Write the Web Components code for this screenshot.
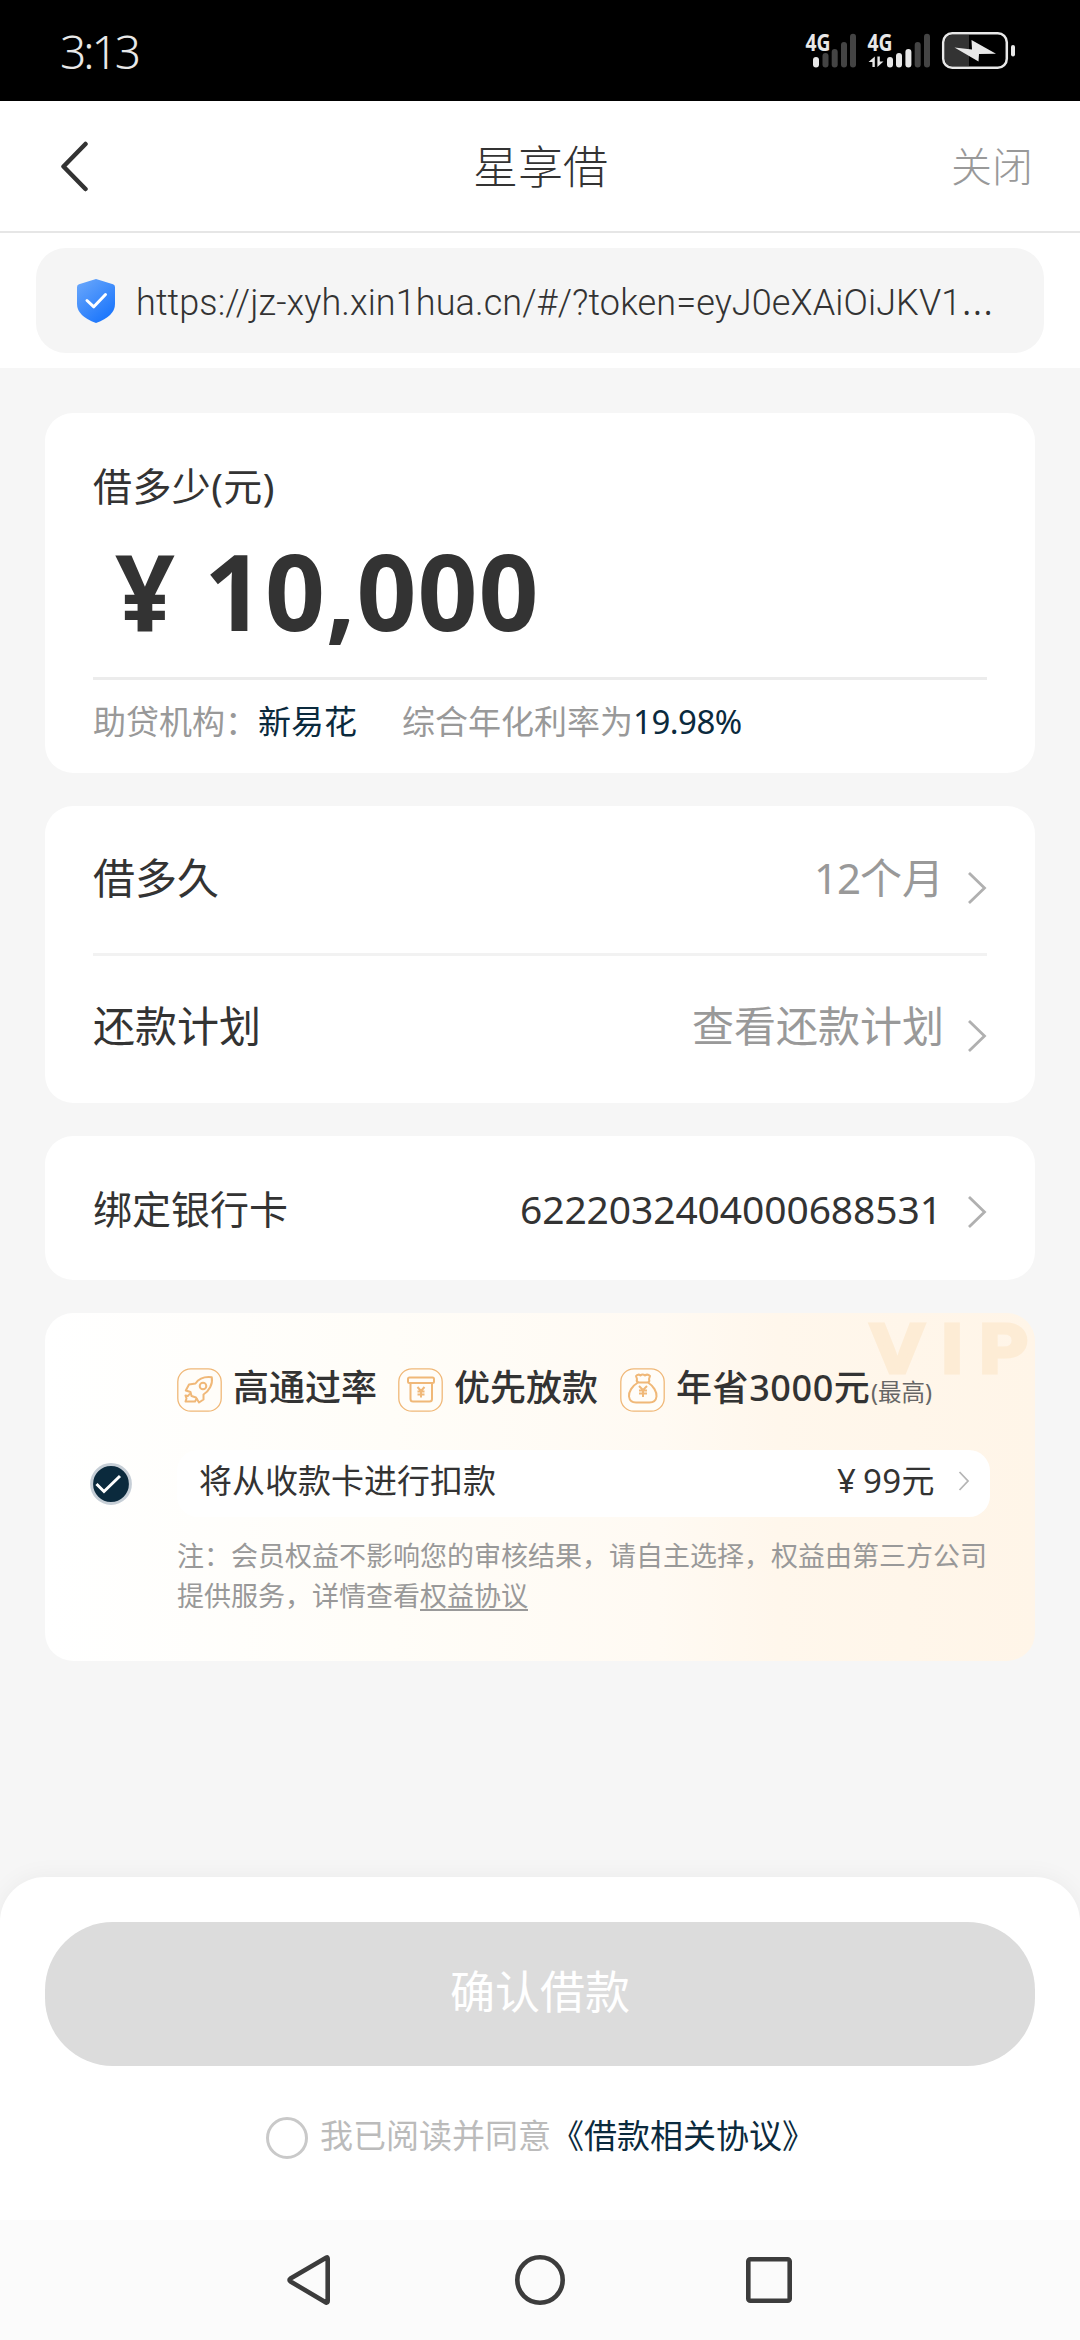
<!DOCTYPE html>
<html lang="zh-CN">
<head>
<meta charset="utf-8">
<title>星享借</title>
<style>
html,body{margin:0;padding:0}
body{width:1080px;height:2340px;overflow:hidden;background:#f6f6f6;color:#333;
font-family:"Noto Sans","Noto Sans CJK SC",sans-serif}
</style>
</head>
<body>
<loan-page></loan-page>
<script>
const define=(name,html,after)=>customElements.define(name,class extends HTMLElement{
  constructor(){super();this.attachShadow({mode:'open'});}
  connectedCallback(){
    this.shadowRoot.innerHTML=typeof html==='function'?html(this):html;
    if(after)after(this);
  }
});

/* Text that spreads its letters over a given advance width */
define('fit-text','<style>:host{display:inline-block;white-space:nowrap}span{display:inline-block}</style><span><slot></slot></span>',el=>{
  const s=el.shadowRoot.querySelector('span'),w=+el.getAttribute('w');
  const n=[...el.textContent].length;
  s.style.letterSpacing=((w-s.offsetWidth)/n)+'px';
  el.style.width=w+'px';
});

define('chevron-icon',el=>{
  const small=el.hasAttribute('small');
  return `<style>:host{display:block;line-height:0}</style>`+(small
  ?`<svg width="12" height="22" viewBox="0 0 12 22"><path d="M1.5 2 10 11 1.5 20" fill="none" stroke="#b5b5b5" stroke-width="1.8"/></svg>`
  :`<svg width="20" height="34" viewBox="0 0 20 34"><path d="M2 2 17.5 17 2 32" fill="none" stroke="#b0b0b0" stroke-width="2.8"/></svg>`);
});

define('status-bar',`<style>
:host{display:flex;height:101px;background:#000;color:#e8e8e8;align-items:center;padding:0 64px 0 60px;box-sizing:border-box}
.time{font-size:46px;font-weight:350;line-height:60px;margin-right:auto;padding-top:0;font-family:"Noto Sans",sans-serif}
svg{display:block;overflow:visible;margin-top:1px}text{font:700 23px "Noto Sans",sans-serif;fill:#e8e8e8}
</style>
<fit-text class="time" w="78">3:13</fit-text>
<svg width="210" height="56" viewBox="806 23 210 56">
<text x="805.5" y="51" textLength="25" lengthAdjust="spacingAndGlyphs">4G</text>
<g fill="#e8e8e8"><rect x="813" y="57" width="6" height="10.5" rx="3"/></g>
<g fill="#444"><rect x="822.5" y="53" width="6" height="14.5" rx="3"/><rect x="831.7" y="49" width="6" height="18.5" rx="3"/><rect x="841" y="42" width="6" height="25.5" rx="3"/><rect x="850" y="33.7" width="6" height="33.8" rx="3"/></g>
<text x="867.5" y="51" textLength="25" lengthAdjust="spacingAndGlyphs">4G</text>
<path d="M868.5 62 874.8 56.500V67H872.400V62ZM883.500 61.500 877.400 67V56.500H879.800V61.500Z" fill="#e8e8e8"/>
<g fill="#e8e8e8"><rect x="887" y="57" width="6" height="10.5" rx="3"/><rect x="896" y="53" width="6" height="14.5" rx="3"/><rect x="905.4" y="49" width="6" height="18.5" rx="3"/></g>
<g fill="#444"><rect x="914.7" y="42" width="6" height="25.5" rx="3"/><rect x="924" y="33.7" width="6" height="33.8" rx="3"/></g>
<path d="M969 35H951a6 6 0 0 0-6 6V60a6 6 0 0 0 6 6H969Z" fill="#333"/>
<rect x="943.2" y="33.2" width="63.6" height="34.6" rx="9" fill="none" stroke="#e8e8e8" stroke-width="2.5"/>
<rect x="1011" y="45" width="4" height="11.5" rx="2" fill="#e8e8e8"/>
<path d="M954.5 47.5 972 49.5 971.5 40 996 53.7 979 54 978.5 61.5Z" fill="#e8e8e8"/>
</svg>`);

define('title-bar',`<style>
:host{display:grid;grid-template-columns:1fr auto 1fr;align-items:center;height:132px;box-sizing:border-box;background:#fff;border-bottom:2px solid #e6e6e6;padding:0 47px 0 58px}
h1{margin:2px 0 0;font-size:45px;font-weight:300;line-height:60px;color:#333;transform:translateX(-5px)}
.close{font-size:41px;font-weight:300;color:#999;line-height:60px;justify-self:end}
svg{display:block}</style>
<svg width="34" height="52" viewBox="0 0 34 52"><path d="M27.500 4 5.500 26.500 27.500 49" fill="none" stroke="#333" stroke-width="4.500" stroke-linecap="round" stroke-linejoin="round"/></svg>
<h1>星享借</h1><div class="close">关闭</div>`);

define('url-bar',`<style>
:host{display:block;background:#fff;padding:15px 36px}
.box{display:flex;align-items:center;height:105px;border-radius:30px;background:#f5f5f5;padding-left:40px;color:#333}
fit-text{font-family:Roboto,"Noto Sans",sans-serif;font-weight:300;font-size:36px;line-height:50px;margin-left:20px;padding-top:4px}
.dots{font-family:"Noto Sans",sans-serif;font-size:44px;line-height:0}
svg{display:block}</style>
<div class="box"><svg width="40" height="46" viewBox="0 0 40 46"><defs><linearGradient id="g" x1="0" y1="0" x2=".7" y2="1"><stop offset="0" stop-color="#6da9fb"/><stop offset="1" stop-color="#1a75fc"/></linearGradient></defs>
<path d="M20 1 37 6.300Q39 7 39 9V26Q39 38 20 45 1 38 1 26V9Q1 7 3 6.300Z" fill="url(#g)"/><path d="M11 22.500 17.800 28.800 29.500 16.500" fill="none" stroke="#fff" stroke-width="3" stroke-linecap="round" stroke-linejoin="round"/></svg>
<fit-text w="858">https://jz-xyh.xin1hua.cn/#/?token=eyJ0eXAiOiJKV1<span class="dots">…</span></fit-text></div>`);

define('info-card',`<style>:host{display:block;background:#fff;border-radius:28px;padding:0 48px;box-sizing:border-box}</style><slot></slot>`);

define('amount-panel',`<style>
:host{display:block;height:360px}
.label{font-size:39px;line-height:60px;padding-top:43px;letter-spacing:.4px}
.amount{display:flex;align-items:center;height:130px;margin-top:10px;padding-left:22px;font-size:105px;font-weight:700;line-height:130px}
.amount fit-text{margin-left:29px}
.meta{display:flex;border-top:3px solid #ececec;margin-top:21px;padding-top:17px;font-size:33px;line-height:50px;color:#999}
b{font-weight:400;color:#0b2a3d}.rate{margin-left:45px}</style>
<div class="label">借多少(元)</div>
<div class="amount"><span>¥</span><fit-text w="335">10,000</fit-text></div>
<div class="meta"><span>助贷机构：<b>新易花</b></span><span class="rate">综合年化利率为<b><fit-text w="109">19.98%</fit-text></b></span></div>`);

define('form-row',el=>`<style>
:host{display:flex;align-items:center;height:147px;box-sizing:border-box;padding-bottom:5px;color:#333;font-size:42px}
:host([line]){height:150px;padding-bottom:0;border-bottom:3px solid #f2f2f2}
:host([bank]){height:144px;font-size:39px;padding:2px 0 0}
.v{margin-left:auto;color:#999;margin-right:23px}
:host([bank]) .v{color:#333;margin-right:25px}
div{line-height:60px;margin-top:-3px}
:host([bank]) div{margin-top:0}
chevron-icon{margin-top:17px}:host([bank]) chevron-icon{margin-top:6px}
</style><div>${el.getAttribute('label')}</div><div class="v"><slot></slot></div><chevron-icon></chevron-icon>`);

const badges={
rocket:`<path d="M34.800 9.300C28 8.500 22 10.500 18.500 15.500L12 16.500 8.800 22.500 13.500 24 14.500 28 19 29.500 22 34.500 26.500 31.500V26.500C32 23 36 16.500 34.800 9.300Z"/><circle cx="26" cy="18" r="3.300"/><path d="M13 25.500 11 28 8.500 27.500 9.500 30.500 8.500 33.500H18L20 30"/>`,
box:`<rect x="10" y="9.500" width="26" height="5.500" rx="1.500"/><path d="M12.500 15.500V31Q12.500 33.500 15 33.500H31.500Q34 33.500 34 31V15.500M19.500 19 23 23 26.500 19M23 23V29.500M19.500 23.500H26.500M19.500 26.500H26.500"/>`,
bag:`<path d="M17 11 16 8Q18 5.500 20.500 7.500 22.500 5.500 25 7.500 27.500 5.500 30 8L29 11Q30 13.500 28 14.500H18.500Q16 13.500 17 11ZM18 14.500C12 18 8.500 24 9 28.500 9.500 32.500 12 34.500 16 34.500H29.500C33.500 34.500 36 32.500 36.500 28.500 37 24 33.500 18 28 14.500M19 18 23 22 27 18M23 22V29M19 22.500H27M19 25.500H27"/>`};
define('perk-badge',el=>`<style>:host{display:flex;align-items:center;height:44px;font-size:36px;font-weight:500;line-height:40px;color:#333}
.t{display:flex;align-items:center;margin-top:-5px}
svg{display:block;margin-right:11px}</style>
<svg width="45" height="44" viewBox="0 0 45 44" fill="none" stroke="#f0b878" stroke-width="2" stroke-linejoin="round"><rect x=".8" y=".8" width="43.400" height="42.400" rx="13" stroke-width="1.300" fill="#fffdf9"/>${badges[el.getAttribute('icon')]}</svg><span class="t"><slot></slot></span>`);

define('vip-card',`<style>
:host{display:block;position:relative;height:348px;border-radius:28px;background:linear-gradient(90deg,#fff 0%,#fffdf8 35%,#fffaf3 62%,#fff7ec 74%,#fff5e8 100%);box-sizing:border-box;padding:55px 45px 0}
.vip{position:absolute;left:825px;top:8px;font:600 65px/56px Inter,sans-serif;color:#fdecd5;-webkit-text-stroke:5px #fdecd5;stroke-linejoin:round;transform:scaleX(1.15);transform-origin:0 0}
.perks{display:flex;margin-left:87px;position:relative}
.p2{margin-left:21px}.p3{margin-left:22px}
small{font-size:23.500px;font-weight:400;color:#666;line-height:24px;margin:9px 0 0 1px}
.row{display:flex;align-items:center;margin-top:38px;height:67px}
.row>svg{display:block;flex:none}
.pill{flex:1;display:flex;align-items:center;height:67px;margin-left:45px;background:#fff;border-radius:21px;padding:0 20px 0 22px;font-size:33px;line-height:48px;box-sizing:border-box;color:#333}
.pill>span{margin-top:-5px}
.price{margin-left:auto;display:flex;margin-right:23px}.price i{font-style:normal;margin-right:7px}
.pill chevron-icon{margin-top:-6px}
p{margin:19px 0 0 87px;font-size:27px;line-height:39.500px;color:#999;white-space:nowrap}
u{text-decoration-thickness:2px;text-underline-offset:3px}
</style>
<fit-text class="vip" w="152">VIP</fit-text>
<div class="perks"><perk-badge icon="rocket">高通过率</perk-badge><perk-badge class="p2" icon="box">优先放款</perk-badge><perk-badge class="p3" icon="bag"><fit-text w="194">年省3000元</fit-text><small>(最高)</small></perk-badge></div>
<div class="row"><svg width="42" height="42" viewBox="0 0 42 42"><circle cx="21" cy="21" r="19.400" fill="#0b2a3d" stroke="#c6ced6" stroke-width="3"/><path d="M6.500 21 14 28.500 30 13" fill="none" stroke="#fff" stroke-width="3"/></svg>
<div class="pill"><span>将从收款卡进行扣款</span><span class="price"><i>¥</i><fit-text w="72">99元</fit-text></span><chevron-icon small></chevron-icon></div></div>
<p>注：会员权益不影响您的审核结果，请自主选择，权益由第三方公司<br>提供服务，详情查看<u>权益协议</u></p>`);

define('confirm-sheet',`<style>
:host{display:block;height:343px;box-sizing:border-box;background:#fff;border-radius:45px 45px 0 0;box-shadow:0 0 24px rgba(0,0,0,.05);padding:45px 45px 0}
button{display:block;width:990px;height:144px;border:0;border-radius:68px;background:#dcdcdc;color:#fff;font:400 45px/60px "Noto Sans","Noto Sans CJK SC",sans-serif;padding:0 0 4px}
.agree{display:flex;align-items:center;height:50px;margin:47px 0 0 221px;font-size:33px;color:#bbb;line-height:50px}
i{box-sizing:border-box;width:42px;height:42px;border:3px solid #c9c9c9;border-radius:50%;margin:0 12px 0 0}
span{margin-top:-5px}b{font-weight:400;color:#0b2a3d}</style>
<button>确认借款</button>
<div class="agree"><i></i><span>我已阅读并同意<b>《借款相关协议》</b></span></div>`);

define('nav-bar',`<style>:host{display:flex;height:120px;background:#fbfbfb;align-items:center;justify-content:center}
svg{display:block}</style>
<svg width="1080" height="120" viewBox="0 2220 1080 120" fill="none" stroke="#3c3c3c" stroke-width="4.600" stroke-linejoin="round"><path d="M326.500 2257.500Q327.700 2257 327.700 2259V2301Q327.700 2303 326 2302.500L290.500 2281.500Q288.500 2280 290.500 2278.500Z"/><circle cx="540" cy="2280" r="22.700"/><rect x="748.300" y="2259.300" width="41.400" height="41.400" rx="2"/></svg>`);

define('loan-page',`<style>
:host{display:flex;flex-direction:column;width:1080px;height:2340px;background:#f6f6f6}
main{flex:1;display:flex;flex-direction:column;gap:33px;padding:45px 45px 0}
</style>
<status-bar></status-bar><title-bar></title-bar><url-bar></url-bar>
<main>
<info-card><amount-panel></amount-panel></info-card>
<info-card><form-row line label="借多久"><fit-text w="46">12</fit-text>个月</form-row><form-row label="还款计划">查看还款计划</form-row></info-card>
<info-card><form-row bank label="绑定银行卡"><fit-text w="422">6222032404000688531</fit-text></form-row></info-card>
<vip-card></vip-card>
</main>
<confirm-sheet></confirm-sheet><nav-bar></nav-bar>`);
</script>
</body>
</html>
